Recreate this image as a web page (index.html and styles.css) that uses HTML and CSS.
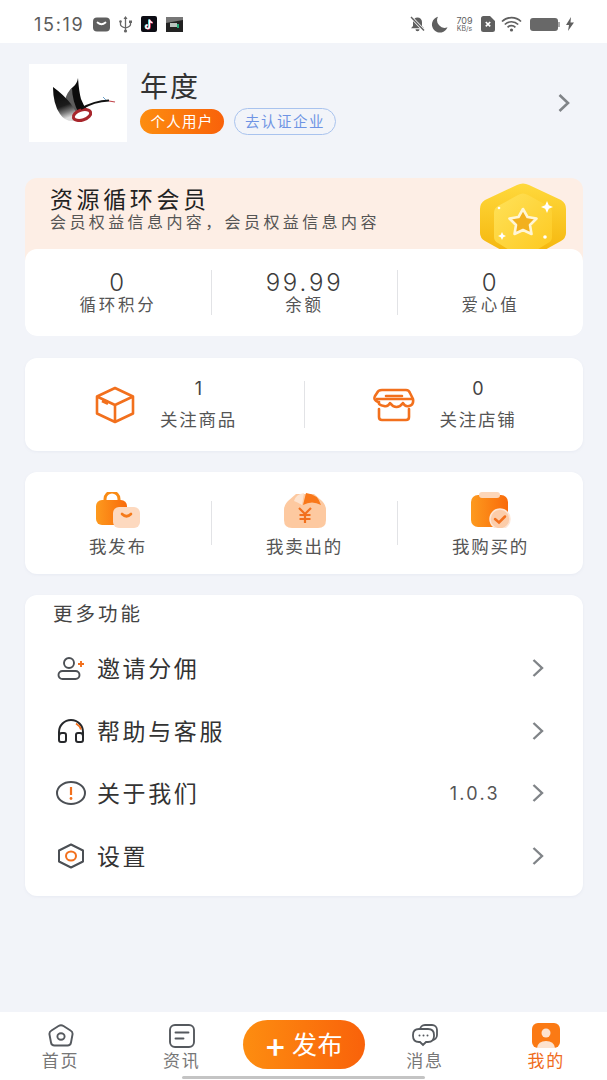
FILE: index.html
```html
<!DOCTYPE html>
<html lang="zh-CN">

<head>
    <meta charset="UTF-8">
    <meta name="viewport" content="width=device-width, initial-scale=1.0">
    <title>我的</title>
    <link rel="stylesheet" href="styles.css">
</head>

<body>

    <header class="status-bar">
        <div class="status-left">
            <span class="status-time">15:19</span>
            <svg class="icon-mail" width="17" height="15" viewBox="0 0 17 15"><rect width="17" height="14" y="0.5" rx="4" fill="#5f5f5f"/><path d="M4.5 5.5q4 3.5 8 0" fill="none" stroke="#fff" stroke-width="1.8" stroke-linecap="round"/></svg>
            <svg class="icon-usb" width="13" height="17" viewBox="0 0 13 17"><path d="M6.5 1v15M1.5 6v2.5q0 2 5 3.5q5-1.5 5-3.500V6" fill="none" stroke="#666" stroke-width="1.3"/><path d="M6.5 0l2 3h-4z" fill="#666"/><circle cx="1.5" cy="5.500" r="1.3" fill="#666"/><rect x="10" y="4.500" width="3" height="2.500" fill="#666"/><circle cx="6.500" cy="15" r="1.600" fill="#666"/></svg>
            <svg class="icon-app" width="16" height="16" viewBox="0 0 16 16"><rect width="16" height="16" rx="2" fill="#0c0c14"/><path d="M8.400 3v7.200a1.800 1.800 0 1 1-1.800-1.800M8.400 3q.4 2.600 3 3" fill="none" stroke="#25d7e0" stroke-width="1.700" transform="translate(-.5 .4)"/><path d="M8.400 3v7.200a1.800 1.800 0 1 1-1.800-1.800M8.400 3q.4 2.600 3 3" fill="none" stroke="#f0305a" stroke-width="1.700" transform="translate(.5 .8)"/><path d="M8.400 3v7.200a1.800 1.800 0 1 1-1.800-1.800M8.400 3q.4 2.600 3 3" fill="none" stroke="#fff" stroke-width="1.400" transform="translate(0 .6)"/></svg>
            <svg class="icon-app" width="17" height="15" viewBox="0 0 17 15"><rect width="17" height="15" fill="#222"/><path d="M0 0h17v3l-17 3z" fill="#777"/><rect x="4" y="6" width="7" height="4" fill="#b9c2be"/><rect x="11" y="7" width="2" height="4" fill="#2a7"/></svg>
        </div>
        <div class="status-right">
            <svg width="15" height="16" viewBox="0 0 15 16"><path d="M7.500 1.500a4.500 4.500 0 0 0-4.500 4.500v4l-2 2.200h13l-2-2.200V6a4.500 4.500 0 0 0-4.500-4.500zM5.500 13.200a2 2 0 0 0 4 0z" fill="#5f5f5f"/><path d="M1 1l13 13.500" stroke="#fff" stroke-width="3"/><path d="M1 1l13 13.500" stroke="#5f5f5f" stroke-width="1.400"/></svg>
            <svg width="17" height="17" viewBox="0 0 17 17"><path d="M7 .8a8 8 0 1 0 9.500 10.400A7.500 7.500 0 0 1 7 .8z" fill="#5f5f5f"/></svg>
            <div class="net-speed"><span>709</span><span class="net-unit">KB/s</span></div>
            <svg width="14" height="16" viewBox="0 0 14 16"><path d="M2.500 0H9l5 5v8.500a2.500 2.500 0 0 1-2.500 2.500h-9A2.500 2.500 0 0 1 0 13.500v-11A2.500 2.500 0 0 1 2.500 0z" fill="#5f5f5f"/><path d="M4.800 6l4.400 4.400M9.200 6l-4.400 4.400" stroke="#fff" stroke-width="1.700"/></svg>
            <svg width="21" height="16" viewBox="0 0 21 16"><path d="M1 5.500a13.500 13.500 0 0 1 19 0M3.800 8.500a9.500 9.500 0 0 1 13.400 0M6.600 11.300a5.500 5.500 0 0 1 7.800 0" fill="none" stroke="#5f5f5f" stroke-width="1.700"/><circle cx="10.500" cy="14" r="1.600" fill="#5f5f5f"/></svg>
            <div class="battery"><span class="battery-cap"></span></div>
            <svg width="8" height="14" viewBox="0 0 8 14"><path d="M5 0L0 8h3l-1 6 6-8.500H4.500z" fill="#5f5f5f"/></svg>
        </div>
    </header>

    <main class="page">

        <section class="profile">
            <div class="avatar">
                <svg width="98" height="78" viewBox="0 0 98 78">
                    <defs>
                        <linearGradient id="wing" x1="0" y1="0" x2="0.25" y2="1">
                            <stop offset="0" stop-color="#050505"/>
                            <stop offset="0.62" stop-color="#1c1c1c"/>
                            <stop offset="0.82" stop-color="#777"/>
                            <stop offset="1" stop-color="#dcdcdc"/>
                        </linearGradient>
                    </defs>
                    <path d="M39 31Q41 25 44 23Q48 20 49 14Q50 28 52 35Q54 41 58 45L48 52Q37 42 39 31z" fill="#0c0c0c"/>
                    <path d="M36 36Q38 28 43 24Q43 36 50 50L44 52Q36 45 36 36z" fill="#5c5c5c"/>
                    <path d="M24 23Q35 31 42 40Q45 45 48 49L46 57Q36 58 31 50Q24 40 24 23z" fill="url(#wing)"/>
                    <ellipse cx="53" cy="51" rx="9" ry="5" transform="rotate(-18 53 51)" fill="#fff" stroke="#a8262c" stroke-width="3"/>
                    <path d="M52 45q13-8 28-8.500" fill="none" stroke="#111" stroke-width="1.800"/>
                    <path d="M80 37l6 1" stroke="#c0444a" stroke-width="1.200"/>
                    <path d="M74 33l3 3" stroke="#6aa0c8" stroke-width="1"/>
                </svg>
            </div>
            <div class="profile-info">
                <h1 class="profile-name">年度</h1>
                <div class="profile-tags">
                    <span class="tag-user">个人用户</span>
                    <span class="tag-auth">去认证企业</span>
                </div>
            </div>
            <svg class="chevron chevron-big" width="14" height="20" viewBox="0 0 14 20"><path d="M2.500 2l8.500 8-8.500 8" fill="none" stroke="#808488" stroke-width="2.600"/></svg>
        </section>

        <section class="member-card">
            <div class="member-head">
                <h2 class="member-title">资源循环会员</h2>
                <p class="member-desc">会员权益信息内容，会员权益信息内容</p>
                <svg class="member-medal" width="88" height="68" viewBox="0 0 88 68">
                    <defs>
                        <linearGradient id="medalOuter" x1="0" y1="0" x2="0" y2="1">
                            <stop offset="0" stop-color="#ffd93c"/>
                            <stop offset="1" stop-color="#f5b70f"/>
                        </linearGradient>
                        <linearGradient id="medalInner" x1="0" y1="0" x2="1" y2="1">
                            <stop offset="0" stop-color="#ffe25a"/>
                            <stop offset="1" stop-color="#fdc920"/>
                        </linearGradient>
                    </defs>
                    <path d="M38 2q6-3 12 0l32 15q5 3 5 9V50q0 5-5 8L64 68H24L6 58q-5-3-5-8V26q0-6 5-9z" fill="url(#medalOuter)"/>
                    <path d="M39 12q5-3 10 0l20 11q4 2 4 7v24q0 4-4 6L56 68H32L19 60q-4-2-4-6V30q0-5 4-7z" fill="url(#medalInner)"/>
                    <path d="M44 26l4.500 8 9 1.500-6.500 6.500 1.500 9-8.500-4-8.500 4 1.500-9-6.500-6.500 9-1.500z" fill="#f2b01e" stroke="#fff6d6" stroke-width="2.600" stroke-linejoin="round"/>
                    <path d="M68 18l1.800 4.200 4.200 1.800-4.200 1.800-1.800 4.200-1.800-4.200-4.200-1.800 4.200-1.800z" fill="#fff"/>
                    <path d="M23 49l1.300 2.700 2.700 1.300-2.700 1.300-1.300 2.700-1.300-2.700-2.700-1.300 2.700-1.300z" fill="#fff"/>
                    <circle cx="66" cy="54" r="1.800" fill="#fff"/>
                    <circle cx="20" cy="25" r="1.300" fill="#fff"/>
                </svg>
            </div>
            <div class="stat-grid">
                <div class="stat-item">
                    <span class="stat-num">0</span>
                    <span class="stat-label">循环积分</span>
                </div>
                <div class="stat-item">
                    <span class="stat-num">99.99</span>
                    <span class="stat-label">余额</span>
                </div>
                <div class="stat-item">
                    <span class="stat-num">0</span>
                    <span class="stat-label">爱心值</span>
                </div>
            </div>
        </section>

        <section class="card follow-card">
            <div class="follow-item">
                <svg width="42" height="38" viewBox="0 0 42 38"><path d="M21 2l18 8.500v17L21 36 3 27.500v-17zM3 10.500L21 19l18-8.500M21 19v17M8 15l6 2.800" fill="none" stroke="#f2701d" stroke-width="2.600" stroke-linejoin="round"/></svg>
                <div class="follow-text">
                    <span class="follow-num">1</span>
                    <span class="follow-label">关注商品</span>
                </div>
            </div>
            <div class="follow-item">
                <svg width="42" height="34" viewBox="0 0 42 34"><path d="M9 2h24q3 0 4 3l3 6q1 6-4 7q-4 1-6-3q-3 4-6.500 4T17 15q-2 4-6 3q-6-1-5-4H5q-5-2-3-6l2-3q1-3 5-3zM3 11h36" fill="none" stroke="#f2701d" stroke-width="2.600" stroke-linejoin="round"/><path d="M6 21v8q0 3 3 3h24q3 0 3-3v-8M13 8h16" fill="none" stroke="#f2701d" stroke-width="2.600" stroke-linecap="round"/></svg>
                <div class="follow-text">
                    <span class="follow-num">0</span>
                    <span class="follow-label">关注店铺</span>
                </div>
            </div>
        </section>

        <section class="card order-card">
            <div class="order-item">
                <svg width="46" height="36" viewBox="0 0 46 36">
                    <defs>
                        <linearGradient id="orangeFill" x1="0" y1="0" x2="1" y2="0">
                            <stop offset="0" stop-color="#fd9a1e"/>
                            <stop offset="1" stop-color="#f96a0a"/>
                        </linearGradient>
                    </defs>
                    <path d="M10 9V7a7 7 0 0 1 14 0v2" fill="none" stroke="#f98a14" stroke-width="3"/>
                    <rect x="1" y="8" width="31" height="25" rx="6" fill="url(#orangeFill)"/>
                    <rect x="18" y="15" width="27" height="21" rx="6" fill="#fdd9bf"/>
                    <path d="M27 22q4.500 4.500 9 0" fill="none" stroke="#f57a1a" stroke-width="2.600" stroke-linecap="round"/>
                </svg>
                <span class="order-label">我发布</span>
            </div>
            <div class="order-item">
                <svg width="42" height="36" viewBox="0 0 42 36">
                    <path d="M12 2h18l8 7q4 4 4 9v10q0 8-8 8H8q-8 0-8-8V18q0-5 4-9z" fill="#fdc9a0"/>
                    <path d="M10 9q2-7 10-8l-2 12q-5-3-8-4z" fill="#fde3cf"/>
                    <path d="M22 1q12 1 15 12q-9-5-18 0z" fill="#f9781a"/>
                    <path d="M15 16l6 6 6-6M21 22v9M15.500 23h11M15.500 27h11" fill="none" stroke="#f2701d" stroke-width="2.200"/>
                </svg>
                <span class="order-label">我卖出的</span>
            </div>
            <div class="order-item">
                <svg width="42" height="36" viewBox="0 0 42 36">
                    <rect x="1" y="3" width="37" height="32" rx="7" fill="url(#orangeFill)"/>
                    <rect x="9" y="0" width="21" height="6" rx="3" fill="#fdd6b8"/>
                    <circle cx="30" cy="27" r="10" fill="#fccdaa" stroke="#fde6d6" stroke-width="1.500"/>
                    <path d="M25 27l4 3.500 6-6" fill="none" stroke="#f2701d" stroke-width="2.500" stroke-linecap="round"/>
                </svg>
                <span class="order-label">我购买的</span>
            </div>
        </section>

        <section class="card more-card">
            <h3 class="more-title">更多功能</h3>
            <ul class="menu-list">
                <li class="menu-row">
                    <svg width="28" height="24" viewBox="0 0 28 24"><circle cx="12" cy="7" r="5" fill="none" stroke="#4b4f54" stroke-width="1.900"/><rect x="1.500" y="15" width="21" height="8" rx="4" fill="none" stroke="#4b4f54" stroke-width="1.900"/><path d="M24 5v6M21 8h6" stroke="#f2701d" stroke-width="1.900"/></svg>
                    <span class="menu-text">邀请分佣</span>
                    <svg class="chevron" width="14" height="20" viewBox="0 0 14 20"><path d="M2.500 2l8.500 8-8.500 8" fill="none" stroke="#808488" stroke-width="2.400"/></svg>
                </li>
                <li class="menu-row">
                    <svg width="28" height="24" viewBox="0 0 28 24"><path d="M2 21v-8a12 12 0 0 1 24 0v8" fill="none" stroke="#26282b" stroke-width="2"/><path d="M19 4.500a11 11 0 0 1 5 6" fill="none" stroke="#f2701d" stroke-width="2"/><path d="M2 17q0-3 3-3h2q2 0 2 2v5q0 2-2 2H4q-2 0-2-2zM26 17q0-3-3-3h-2q-2 0-2 2v5q0 2 2 2h3q2 0 2-2z" fill="#fff" stroke="#26282b" stroke-width="2"/></svg>
                    <span class="menu-text">帮助与客服</span>
                    <svg class="chevron" width="14" height="20" viewBox="0 0 14 20"><path d="M2.500 2l8.500 8-8.500 8" fill="none" stroke="#808488" stroke-width="2.400"/></svg>
                </li>
                <li class="menu-row">
                    <svg width="30" height="24" viewBox="0 0 30 24"><ellipse cx="15" cy="12" rx="14" ry="11" fill="none" stroke="#4b4f54" stroke-width="2"/><path d="M15 6v8" stroke="#f2701d" stroke-width="2.200"/><circle cx="15" cy="17.500" r="1.400" fill="#f2701d"/></svg>
                    <span class="menu-text">关于我们</span>
                    <span class="menu-version">1.0.3</span>
                    <svg class="chevron" width="14" height="20" viewBox="0 0 14 20"><path d="M2.500 2l8.500 8-8.500 8" fill="none" stroke="#808488" stroke-width="2.400"/></svg>
                </li>
                <li class="menu-row">
                    <svg width="28" height="26" viewBox="0 0 28 26"><path d="M14 1.500L26 7.500V18.500L14 24.500L2 18.500V7.500z" fill="none" stroke="#4b4f54" stroke-width="2" stroke-linejoin="round"/><ellipse cx="14" cy="13" rx="5" ry="4.500" fill="none" stroke="#f2701d" stroke-width="2"/></svg>
                    <span class="menu-text">设置</span>
                    <svg class="chevron" width="14" height="20" viewBox="0 0 14 20"><path d="M2.500 2l8.500 8-8.500 8" fill="none" stroke="#808488" stroke-width="2.400"/></svg>
                </li>
            </ul>
        </section>

    </main>

    <nav class="tabbar">
        <div class="tab-item">
            <svg width="26" height="24" viewBox="0 0 26 24"><path d="M10.500 2q2.500-1.500 5 0l7 4.500q2.500 1.500 2 4l-1.500 8q-.5 3-3.500 3H6.500q-3 0-3.500-3l-1.500-8q-.5-2.500 2-4z" fill="none" stroke="#55595e" stroke-width="1.900"/><ellipse cx="13" cy="12.500" rx="3.600" ry="3.200" fill="none" stroke="#55595e" stroke-width="1.900"/></svg>
            <span>首页</span>
        </div>
        <div class="tab-item">
            <svg width="26" height="24" viewBox="0 0 26 24"><rect x="1" y="1" width="24" height="22" rx="5" fill="none" stroke="#55595e" stroke-width="1.900"/><path d="M6.500 8.500h13M6.500 14.500h8" stroke="#55595e" stroke-width="1.900" stroke-linecap="round"/></svg>
            <span>资讯</span>
        </div>
        <button class="publish-btn"><span class="publish-plus">+</span>发布</button>
        <div class="tab-item">
            <svg width="26" height="24" viewBox="0 0 26 24"><rect x="8" y="1" width="17" height="15" rx="5" fill="none" stroke="#55595e" stroke-width="1.800"/><path d="M7 5h9q6 0 6 6v1q0 6-6 6h-2l-3 3-3-3H7q-6 0-6-6v-1q0-6 6-6z" fill="#fff" stroke="#55595e" stroke-width="1.800"/><circle cx="7.500" cy="11.500" r="1" fill="#55595e"/><circle cx="11.500" cy="11.500" r="1" fill="#55595e"/><circle cx="15.500" cy="11.500" r="1" fill="#55595e"/></svg>
            <span>消息</span>
        </div>
        <div class="tab-item tab-active">
            <svg width="28" height="25" viewBox="0 0 28 25"><rect width="28" height="25" rx="6" fill="#fb7a14"/><ellipse cx="14" cy="10" rx="4.500" ry="4.500" fill="#fde3cf"/><path d="M5 25q1-7 9-7t9 7z" fill="#fde3cf"/></svg>
            <span>我的</span>
        </div>
        <div class="home-bar"></div>
    </nav>

</body>

</html>
```

FILE: styles.css
```css
* {
    box-sizing: border-box;
}

body {
    margin: 0;
    padding: 0;
    width: 607px;
    height: 1080px;
    display: flex;
    flex-direction: column;
    overflow: hidden;
    background-color: #f2f4f9;
    color: #333;
    font-family: "Inter", "Noto Sans CJK SC", sans-serif;
}

h1,
h2,
h3,
p,
ul {
    margin: 0;
    padding: 0;
    font-weight: 400;
}

/* status bar */
.status-bar {
    height: 43px;
    padding: 5px 33px 0 34px;
    background-color: #fff;
    display: flex;
    justify-content: space-between;
    align-items: center;
}

.status-left,
.status-right {
    display: flex;
    align-items: center;
}

.status-left {
    gap: 9px;
}

.status-right {
    gap: 6px;
}

.status-time {
    font-size: 18px;
    letter-spacing: 1.700px;
    color: #5b5b5b;
}

.net-speed {
    display: flex;
    flex-direction: column;
    align-items: center;
    font-size: 9px;
    line-height: 9px;
    color: #5f5f5f;
    width: 21px;
}

.net-unit {
    font-size: 7px;
    line-height: 8px;
}

.battery {
    position: relative;
    width: 28px;
    height: 13px;
    margin-left: 2px;
    margin-right: 2px;
    border-radius: 3px;
    background-color: #686868;
}

.battery-cap {
    position: absolute;
    top: 4px;
    right: -2px;
    width: 2px;
    height: 5px;
    background-color: #aaa;
}

/* main column */
.page {
    flex: 1;
    padding: 21px 24px 0 25px;
}

.card {
    background-color: #fff;
    border-radius: 12px;
    box-shadow: 0 1px 3px rgba(120, 130, 160, 0.08);
}

/* profile */
.profile {
    display: flex;
    align-items: center;
    height: 78px;
    padding: 0 12px 0 4px;
}

.avatar {
    width: 98px;
    height: 78px;
    background-color: #fff;
}

.avatar svg {
    display: block;
}

.profile-info {
    flex: 1;
    margin-left: 13px;
}

.profile-name {
    font-size: 28px;
    line-height: 32px;
    letter-spacing: 2px;
    color: #333;
}

.profile-tags {
    display: flex;
    align-items: center;
    gap: 10px;
    margin-top: 5px;
}

.tag-user {
    width: 84px;
    height: 25px;
    line-height: 25px;
    text-align: center;
    border-radius: 13px;
    font-size: 14.500px;
    letter-spacing: 1.300px;
    color: #fff;
    background: linear-gradient(90deg, #fd8d10, #f9620a);
}

.tag-auth {
    width: 102px;
    height: 27px;
    line-height: 25px;
    text-align: center;
    border: 1px solid #a9c3ee;
    border-radius: 14px;
    font-size: 14.500px;
    letter-spacing: 1.500px;
    color: #6f94e4;
}

.chevron {
    flex: none;
}

/* member card */
.member-card {
    margin-top: 36px;
    border-radius: 12px;
    overflow: hidden;
}

.member-head {
    position: relative;
    height: 84px;
    padding: 10px 0 0 25px;
    background-color: #fdeee5;
}

.member-title {
    font-size: 23px;
    line-height: 25px;
    letter-spacing: 3.600px;
    color: #222;
}

.member-desc {
    font-size: 16px;
    line-height: 18px;
    letter-spacing: 3.400px;
    color: #555;
}

.member-medal {
    position: absolute;
    top: 5px;
    left: 454px;
}

.stat-grid {
    display: grid;
    grid-template-columns: repeat(3, 1fr);
    height: 87px;
    margin-top: -13px;
    padding: 21px 0;
    position: relative;
    background-color: #fff;
    border-radius: 12px;
}

.stat-item {
    display: flex;
    flex-direction: column;
    align-items: center;
    justify-content: center;
    height: 45px;
}

.stat-item + .stat-item {
    border-left: 1px solid #e2e3e6;
}

.stat-num {
    font-size: 24px;
    line-height: 24px;
    letter-spacing: 2.800px;
    font-weight: 300;
    color: #3c3c3c;
}

.stat-label {
    font-size: 16.500px;
    line-height: 20px;
    letter-spacing: 2.800px;
    color: #555;
}

/* follow card */
.follow-card {
    display: grid;
    grid-template-columns: repeat(2, 1fr);
    height: 93px;
    margin-top: 22px;
    padding: 23px 0 23px;
}

.follow-item {
    display: flex;
    align-items: center;
    justify-content: center;
    gap: 24px;
    height: 47px;
    padding-left: 2px;
}

.follow-item + .follow-item {
    border-left: 1px solid #e2e3e6;
}

.follow-text {
    display: flex;
    flex-direction: column;
    align-items: center;
}

.follow-num {
    font-size: 18px;
    line-height: 24px;
    color: #444;
}

.follow-label {
    font-size: 17.500px;
    line-height: 24px;
    margin-top: 7px;
    letter-spacing: 1.800px;
    color: #555;
}

/* order card */
.order-card {
    display: grid;
    grid-template-columns: repeat(3, 1fr);
    height: 102px;
    margin-top: 21px;
    padding: 29px 0;
}

.order-item {
    position: relative;
    display: flex;
    flex-direction: column;
    align-items: center;
    justify-content: flex-end;
    height: 44px;
}

.order-item + .order-item {
    border-left: 1px solid #e2e3e6;
}

.order-item svg {
    position: absolute;
    top: -9px;
}

.order-label {
    position: absolute;
    top: 34px;
    font-size: 17.500px;
    line-height: 24px;
    white-space: nowrap;
    letter-spacing: 1.800px;
    color: #555;
}

/* more */
.more-card {
    height: 301px;
    margin-top: 21px;
    padding-top: 7px;
}

.more-title {
    height: 35px;
    padding-left: 28px;
    font-size: 19.500px;
    line-height: 24px;
    letter-spacing: 3px;
    color: #444;
}

.menu-list {
    list-style: none;
}

.menu-row {
    display: flex;
    align-items: center;
    height: 62.600px;
    padding: 0 38px 0 31px;
}

.menu-row > svg:first-child {
    width: 30px;
}

.menu-text {
    flex: 1;
    margin-left: 11px;
    padding-bottom: 2px;
    font-size: 23px;
    letter-spacing: 2.600px;
    color: #333;
}

.menu-version {
    margin-right: 31px;
    font-size: 18px;
    letter-spacing: 2.300px;
    color: #555;
}

/* tabs */
.tabbar {
    position: relative;
    display: grid;
    grid-template-columns: repeat(5, 1fr);
    align-items: start;
    height: 68px;
    background-color: #fff;
}

.tab-item {
    display: flex;
    flex-direction: column;
    align-items: center;
    padding-top: 12px;
    color: #777;
}

.tab-item span {
    font-size: 17px;
    line-height: 22px;
    letter-spacing: 2px;
    margin-top: 2px;
}

.tab-active {
    padding-top: 11px;
    color: #ef6c1c;
}

.publish-btn {
    width: 122px;
    height: 49px;
    margin-top: 8px;
    padding: 0 0 4px;
    justify-self: center;
    border: none;
    border-radius: 25px;
    font-family: inherit;
    font-size: 25px;
    letter-spacing: 0.500px;
    color: #fff;
    background: linear-gradient(90deg, #fd8d10, #f9620a);
}

.publish-plus {
    font-size: 34px;
    font-weight: 500;
    line-height: 26px;
    margin-right: 5px;
    vertical-align: -3px;
}

.home-bar {
    position: absolute;
    left: 182px;
    bottom: 1px;
    width: 243px;
    height: 3px;
    border-radius: 2px;
    background-color: #c4c4c4;
}
```
